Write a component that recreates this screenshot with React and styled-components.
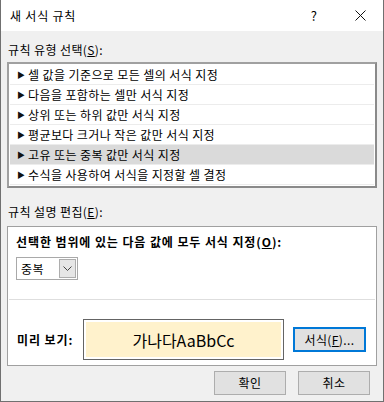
import React from "react";
import styled, { createGlobalStyle } from "styled-components";

const FONT = `"Noto Sans CJK KR", "Noto Sans", sans-serif`;

const GlobalStyle = createGlobalStyle`
  html, body {
    margin: 0;
    padding: 0;
    background: #ffffff;
  }
  * {
    box-sizing: border-box;
  }
`;

const RULE_TYPES = [
  "셀 값을 기준으로 모든 셀의 서식 지정",
  "다음을 포함하는 셀만 서식 지정",
  "상위 또는 하위 값만 서식 지정",
  "평균보다 크거나 작은 값만 서식 지정",
  "고유 또는 중복 값만 서식 지정",
  "수식을 사용하여 서식을 지정할 셀 결정",
];

const SELECTED = 4;

export default function App() {
  return (
    <>
      <GlobalStyle />
      <Window>
        <TitleBar>
          <Title>새 서식 규칙</Title>
          <TitleButton>?</TitleButton>
          <TitleButton>
            <svg width="11" height="11" viewBox="0 0 11 11">
              <path d="M0.5 0.5 L10.5 10.5 M10.5 0.5 L0.5 10.5" stroke="#111" strokeWidth="1" fill="none" />
            </svg>
          </TitleButton>
        </TitleBar>

        <Body>
          <SectionLabel>
            규칙 유형 선택(<u>S</u>):
          </SectionLabel>
          <ListBox>
            {RULE_TYPES.map((text, i) => (
              <ListRow key={text} $selected={i === SELECTED}>
                <Arrow>▶</Arrow>
                {text}
              </ListRow>
            ))}
          </ListBox>

          <SectionLabel $top={16}>
            규칙 설명 편집(<u>E</u>):
          </SectionLabel>
          <Panel>
            <PanelHeading>
              선택한 범위에 있는 다음 값에 모두 서식 지정(<u>O</u>):
            </PanelHeading>
            <Select>
              <SelectValue>중복</SelectValue>
              <SelectButton>
                <svg width="9" height="5" viewBox="0 0 9 5">
                  <path d="M0.5 0.5 L4.5 4.5 L8.5 0.5" stroke="#444" strokeWidth="1" fill="none" />
                </svg>
              </SelectButton>
            </Select>
            <Divider />
            <PreviewRow>
              <PreviewLabel>미리 보기:</PreviewLabel>
              <PreviewBox>
                <PreviewFill>가나다AaBbCc</PreviewFill>
              </PreviewBox>
              <Button $focused $width={73} $height={25}>
                서식(<u>F</u>)...
              </Button>
            </PreviewRow>
          </Panel>
        </Body>

        <Footer>
          <Button $width={72} $height={24}>확인</Button>
          <Button $width={72} $height={24}>취소</Button>
        </Footer>
      </Window>
    </>
  );
}

const Window = styled.div`
  width: 384px;
  height: 402px;
  background: #f0f0f0;
  border: 1px solid #707070;
  border-top: none;
  display: flex;
  flex-direction: column;
  font-family: ${FONT};
  font-size: 12px;
  letter-spacing: 0.4px;
  color: #000;
`;

const TitleBar = styled.div`
  height: 31px;
  background: #ffffff;
  display: flex;
  align-items: center;
  padding-left: 9px;
`;

const Title = styled.div`
  flex: 1;
  font-size: 12px;
  line-height: 16px;
  letter-spacing: 0.8px;
  padding-top: 1px;
`;

const TitleButton = styled.div`
  width: 46px;
  height: 31px;
  display: flex;
  align-items: center;
  justify-content: center;
  font-size: 13px;
`;

const Body = styled.div`
  padding: 0 6px;
  display: flex;
  flex-direction: column;
`;

const SectionLabel = styled.div`
  margin-top: ${(p) => p.$top ?? 11}px;
  margin-left: 1px;
  line-height: 16px;
  height: 16px;
  margin-bottom: 4px;
  u {
    text-underline-offset: 1px;
  }
`;

const ListBox = styled.div`
  height: 126px;
  background: #fff;
  border: 2px solid #828282;
  border-color: #a0a0a0 #8a8a8a #8a8a8a #a0a0a0;
  padding: 1px;
  display: flex;
  flex-direction: column;
`;

const ListRow = styled.div`
  height: 20px;
  display: flex;
  align-items: center;
  border-bottom: 1px solid #ececec;
  padding-left: 7px;
  background: ${(p) => (p.$selected ? "#dadada" : "#ffffff")};
  line-height: 16px;
  white-space: nowrap;
`;

const Arrow = styled.span`
  font-size: 8px;
  width: 10px;
  margin-right: 1px;
  color: #111;
`;

const Panel = styled.div`
  margin-top: 2px;
  height: 140px;
  background: #fff;
  border: 1px solid #a0a0a0;
  padding: 7px 1px 0 1px;
  display: flex;
  flex-direction: column;
`;

const PanelHeading = styled.div`
  font-weight: bold;
  letter-spacing: 0.9px;
  line-height: 16px;
  padding-left: 7px;
  white-space: nowrap;
`;

const Select = styled.div`
  margin: 7px 0 0 7px;
  width: 62px;
  height: 23px;
  border: 1px solid #a9a9a9;
  display: flex;
  align-items: stretch;
  padding: 1px;
`;

const SelectValue = styled.div`
  flex: 1;
  display: flex;
  align-items: center;
  padding-left: 3px;
  line-height: 16px;
`;

const SelectButton = styled.div`
  width: 17px;
  background: #e6e6e6;
  border: 1px solid #adadad;
  display: flex;
  align-items: center;
  justify-content: center;
`;

const Divider = styled.div`
  height: 1px;
  background: #dedede;
  margin-top: 19px;
`;

const PreviewRow = styled.div`
  margin-top: 19px;
  display: flex;
  align-items: center;
`;

const PreviewLabel = styled.div`
  width: 74px;
  padding-left: 8px;
  font-weight: bold;
  letter-spacing: 0.9px;
  line-height: 16px;
`;

const PreviewBox = styled.div`
  width: 201px;
  height: 41px;
  border: 1px solid #646464;
  padding: 2px;
  background: #fff;
`;

const PreviewFill = styled.div`
  height: 100%;
  background: #fff2cc;
  display: flex;
  align-items: center;
  justify-content: center;
  font-size: 16px;
  letter-spacing: 0;
  line-height: 20px;
`;

const Button = styled.div`
  width: ${(p) => p.$width}px;
  height: ${(p) => p.$height}px;
  margin-left: ${(p) => (p.$focused ? 9 : 0)}px;
  background: #e1e1e1;
  border: ${(p) => (p.$focused ? "2px solid #0078d7" : "1px solid #adadad")};
  display: flex;
  align-items: center;
  justify-content: center;
  line-height: 16px;
  font-size: 12px;
`;

const Footer = styled.div`
  margin-top: 5px;
  padding-right: 13px;
  display: flex;
  justify-content: flex-end;
  gap: 12px;
`;
